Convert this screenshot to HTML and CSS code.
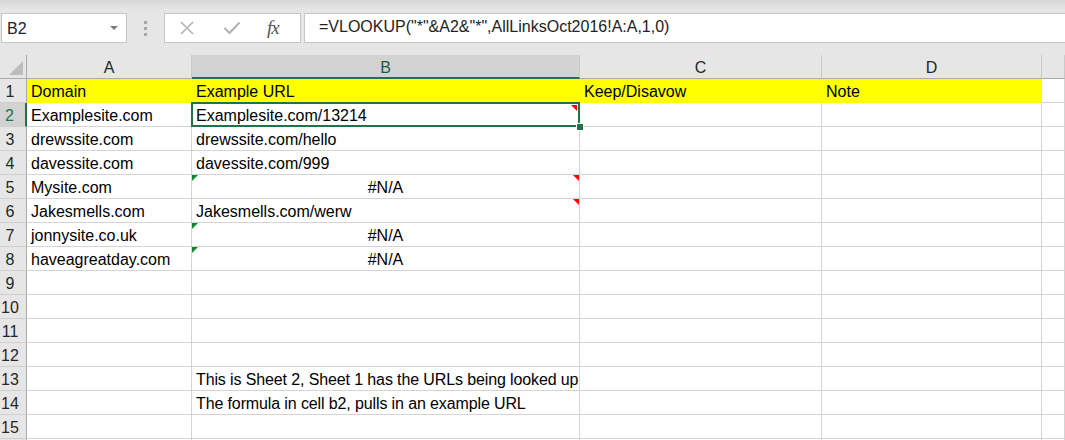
FILE: index.html
```html
<!DOCTYPE html>
<html>
<head>
<meta charset="utf-8">
<link rel="stylesheet" href="styles.css">
</head>
<body>
<div class="toolbar">
  <div class="namebox"><span class="nb-text">B2</span><span class="nb-arrow"></span></div>
  <div class="grip"><i></i><i></i><i></i></div>
  <div class="fbuttons">
    <svg class="ico" width="16" height="16" viewBox="0 0 16 16"><path d="M2 2L14 14M14 2L2 14" stroke="#b4b4b4" stroke-width="1.6" fill="none"/></svg>
    <svg class="ico" width="18" height="14" viewBox="0 0 18 14"><path d="M1.5 7L6.5 12L16.5 1.5" stroke="#b4b4b4" stroke-width="2.2" fill="none"/></svg>
    <span class="fx">fx</span>
  </div>
  <div class="formula">=VLOOKUP("*"&amp;A2&amp;"*",AllLinksOct2016!A:A,1,0)</div>
</div>
<div class="sheet">
  <div class="corner"><span class="corner-tri"></span></div>
  <div class="ch">A</div><div class="ch sel">B</div><div class="ch">C</div><div class="ch">D</div><div class="ch"></div>

  <div class="rh">1</div><div class="c hl">Domain</div><div class="c hl">Example URL</div><div class="c hl">Keep/Disavow</div><div class="c hl">Note</div><div class="c"></div>

  <div class="rh rsel">2</div><div class="c">Examplesite.com</div><div class="c active">Examplesite.com/13214<span class="frame"></span><span class="cm in"></span><span class="handle"></span></div><div class="c"></div><div class="c"></div><div class="c"></div>

  <div class="rh">3</div><div class="c">drewssite.com</div><div class="c">drewssite.com/hello</div><div class="c"></div><div class="c"></div><div class="c"></div>

  <div class="rh">4</div><div class="c">davessite.com</div><div class="c">davessite.com/999</div><div class="c"></div><div class="c"></div><div class="c"></div>

  <div class="rh">5</div><div class="c">Mysite.com</div><div class="c na">#N/A<span class="err"></span><span class="cm"></span></div><div class="c"></div><div class="c"></div><div class="c"></div>

  <div class="rh">6</div><div class="c">Jakesmells.com</div><div class="c">Jakesmells.com/werw<span class="cm"></span></div><div class="c"></div><div class="c"></div><div class="c"></div>

  <div class="rh">7</div><div class="c">jonnysite.co.uk</div><div class="c na">#N/A<span class="err"></span></div><div class="c"></div><div class="c"></div><div class="c"></div>

  <div class="rh">8</div><div class="c">haveagreatday.com</div><div class="c na">#N/A<span class="err"></span></div><div class="c"></div><div class="c"></div><div class="c"></div>

  <div class="rh">9</div><div class="c"></div><div class="c"></div><div class="c"></div><div class="c"></div><div class="c"></div>

  <div class="rh">10</div><div class="c"></div><div class="c"></div><div class="c"></div><div class="c"></div><div class="c"></div>

  <div class="rh">11</div><div class="c"></div><div class="c"></div><div class="c"></div><div class="c"></div><div class="c"></div>

  <div class="rh">12</div><div class="c"></div><div class="c"></div><div class="c"></div><div class="c"></div><div class="c"></div>

  <div class="rh">13</div><div class="c"></div><div class="c tight">This is Sheet 2, Sheet 1 has the URLs being looked up</div><div class="c"></div><div class="c"></div><div class="c"></div>

  <div class="rh">14</div><div class="c"></div><div class="c tight">The formula in cell b2, pulls in an example URL</div><div class="c"></div><div class="c"></div><div class="c"></div>

  <div class="rh">15</div><div class="c"></div><div class="c"></div><div class="c"></div><div class="c"></div><div class="c"></div>

  <div class="rh"></div><div class="c"></div><div class="c"></div><div class="c"></div><div class="c"></div><div class="c"></div>
</div>
</body>
</html>
```
FILE: styles.css
```css
* { box-sizing: border-box; }
html, body { margin: 0; padding: 0; }
body {
  width: 1065px;
  height: 440px;
  overflow: hidden;
  background: #ffffff;
  font-family: "Liberation Sans", Arial, sans-serif;
  font-size: 16px;
  color: #000;
}
.toolbar {
  height: 55px;
  background: linear-gradient(#d8d8d8 0px, #e4e4e4 8px, #e6e6e6 14px);
  display: flex;
  align-items: flex-start;
  padding-top: 13px;
  padding-left: 1px;
}
.namebox {
  width: 126px;
  height: 30px;
  background: #fff;
  border: 1px solid #c6c6c6;
  display: flex;
  align-items: center;
  justify-content: space-between;
  padding: 0 8px 0 5px;
  color: #222;
}
.nb-text { padding-top: 1px; }
.nb-arrow {
  width: 0; height: 0;
  border-left: 4px solid transparent;
  border-right: 4px solid transparent;
  border-top: 4px solid #7a7a7a;
}
.grip {
  width: 37px;
  height: 30px;
  display: flex;
  flex-direction: column;
  align-items: center;
  justify-content: center;
  gap: 3px;
}
.grip i { display: block; width: 3px; height: 3px; background: #a9a9a9; }
.fbuttons {
  width: 137px;
  height: 30px;
  background: #fff;
  border: 1px solid #c6c6c6;
  display: flex;
  align-items: center;
  padding-left: 14px;
}
.fbuttons .ico:first-child { margin-right: 28px; }
.fbuttons .ico:nth-child(2) { margin-right: 26px; }
.fx {
  font-family: "Liberation Serif", "Times New Roman", serif;
  font-style: italic;
  font-size: 19px;
  color: #555;
  letter-spacing: -1px;
}
.formula {
  margin-left: 3px;
  flex: 1;
  height: 30px;
  background: #fff;
  border: 1px solid #c6c6c6;
  border-right: none;
  padding: 4px 0 0 14px;
  color: #222;
  white-space: nowrap;
}
.sheet {
  display: grid;
  grid-template-columns: 27px 165px 388px 242px 220px 1fr;
  grid-auto-rows: 24px;
}
.corner {
  position: relative;
  background: #e6e6e6;
  border-right: 1px solid #ababab;
  border-bottom: 1px solid #ababab;
}
.corner-tri {
  position: absolute;
  right: 3px;
  bottom: 3px;
  width: 0; height: 0;
  border-left: 14px solid transparent;
  border-bottom: 14px solid #bcbcbc;
}
.ch {
  background: #e6e6e6;
  border-right: 1px solid #c9c9c9;
  border-bottom: 1px solid #ababab;
  text-align: center;
  line-height: 23px;
  color: #262626;
  padding-top: 1px;
}
.ch.sel {
  background: #d2d2d2;
  border-bottom: 2px solid #217346;
  color: #1e5c3a;
}
.rh {
  background: #e6e6e6;
  border-right: 1px solid #ababab;
  border-bottom: 1px solid #d0d0d0;
  text-align: center;
  padding-right: 6px;
  line-height: 23px;
  color: #262626;
  padding-top: 1px;
}
.rh.rsel {
  background: #d2d2d2;
  border-right: 2px solid #217346;
  color: #217346;
}
.c {
  position: relative;
  border-right: 1px solid #d4d4d4;
  border-bottom: 1px solid #d4d4d4;
  line-height: 23px;
  padding: 1px 0 0 4px;
  white-space: nowrap;
}
.c.tight { letter-spacing: -0.12px; }
.c.hl {
  background: #ffff00;
  border-color: #ffff00;
}
.c.na { text-align: center; padding-left: 0; }
.cm {
  position: absolute;
  right: 0;
  top: 0;
  width: 0; height: 0;
  border-left: 6px solid transparent;
  border-top: 6px solid #ff0000;
}
.cm.in { right: 2px; top: 2px; }
.err {
  position: absolute;
  left: 0;
  top: 0;
  width: 0; height: 0;
  border-right: 6px solid transparent;
  border-top: 6px solid #0e8a2c;
}
.c.active { z-index: 2; }
.frame {
  position: absolute;
  left: -1px;
  top: -1px;
  right: -1px;
  bottom: -1px;
  border: 2px solid #217346;
  pointer-events: none;
}
.handle {
  position: absolute;
  right: -5px;
  bottom: -5px;
  width: 6px;
  height: 6px;
  background: #217346;
  border: 1px solid #fff;
  box-sizing: content-box;
}
```
